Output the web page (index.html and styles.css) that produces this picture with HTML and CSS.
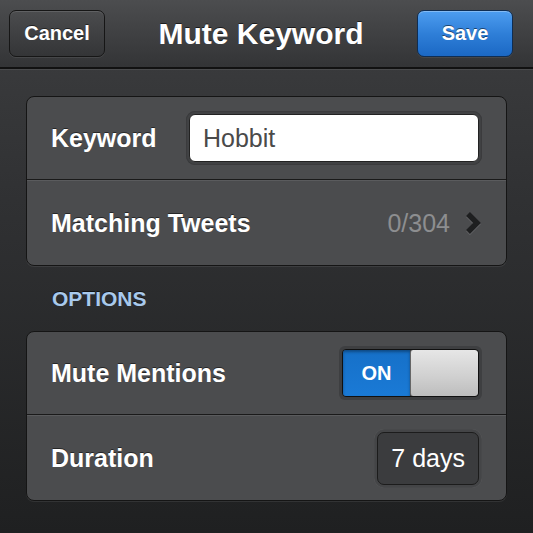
FILE: index.html
```html
<!DOCTYPE html>
<html>
<head>
<meta charset="utf-8">
<link rel="stylesheet" href="styles.css">
</head>
<body>
<div class="screen">
  <header class="navbar">
    <button class="nav-btn cancel">Cancel</button>
    <h1 class="title">Mute Keyword</h1>
    <button class="nav-btn save">Save</button>
  </header>
  <main class="content">
    <section class="card">
      <div class="row row-first">
        <span class="label">Keyword</span>
        <div class="input-wrap"><div class="input">Hobbit</div></div>
      </div>
      <div class="row row-second">
        <span class="label">Matching Tweets</span>
        <span class="value">0/304</span>
        <svg class="chevron" width="18" height="26" viewBox="0 0 18 26">
          <polyline points="4,4 13,13 4,22" fill="none" stroke="#6a6b6d" stroke-width="5.5" stroke-linejoin="miter" transform="translate(0,1)"/>
          <polyline points="4,4 13,13 4,22" fill="none" stroke="#1e1f20" stroke-width="5.5" stroke-linejoin="miter"/>
        </svg>
      </div>
    </section>
    <div class="section-title">OPTIONS</div>
    <section class="card">
      <div class="row row-first">
        <span class="label">Mute Mentions</span>
        <div class="switch-wrap">
          <div class="switch">
            <span class="switch-on">ON</span>
            <span class="switch-knob"></span>
          </div>
        </div>
      </div>
      <div class="row row-second">
        <span class="label">Duration</span>
        <div class="pill-wrap"><div class="pill">7 days</div></div>
      </div>
    </section>
  </main>
</div>
</body>
</html>
```

FILE: styles.css
```css
html, body {
  margin: 0;
  padding: 0;
  width: 533px;
  height: 533px;
  overflow: hidden;
  background: #252627;
}
.screen {
  width: 533px;
  height: 533px;
  display: flex;
  flex-direction: column;
  font-family: "Liberation Sans", Arial, sans-serif;
  background: linear-gradient(#3d3e40 0px, #303133 200px, #1f2021 533px);
}
.navbar {
  height: 69px;
  box-sizing: border-box;
  border-bottom: 2px solid #111;
  box-shadow: 0 1px 0 #4a4b4d;
  background: linear-gradient(#4c4d4f, #333436);
  display: flex;
  align-items: flex-start;
  justify-content: space-between;
  padding: 10px 20px 0 9px;
}
.nav-btn {
  width: 96px;
  height: 47px;
  border-radius: 7px;
  border: 1px solid #161616;
  font-family: "Liberation Sans", Arial, sans-serif;
  font-weight: bold;
  font-size: 20px;
  color: #fff;
  padding: 0;
  margin: 0;
  text-shadow: 0 -1px 0 rgba(0,0,0,0.5);
}
.cancel {
  background: linear-gradient(#4b4c4e, #343537);
  box-shadow: inset 0 1px 0 rgba(255,255,255,0.12), 0 1px 0 rgba(255,255,255,0.08);
}
.save {
  background: linear-gradient(#4d9df0, #2f7fd8 50%, #1b68c4);
  border-color: #0f2d52;
  box-shadow: inset 0 1px 0 rgba(255,255,255,0.3), 0 1px 0 rgba(255,255,255,0.08);
}
.title {
  margin: 5px 0 0 0;
  font-size: 30px;
  font-weight: bold;
  color: #fff;
  line-height: 38px;
  text-shadow: 0 -1px 0 rgba(0,0,0,0.6);
}
.content {
  padding: 27px 26px 0 26px;
  display: flex;
  flex-direction: column;
}
.card {
  background: #4b4c4e;
  border: 1px solid #151515;
  border-radius: 8px;
  box-shadow: 0 1px 0 rgba(255,255,255,0.08);
  display: flex;
  flex-direction: column;
  overflow: hidden;
}
.row {
  display: flex;
  align-items: center;
  padding: 0 24px 0 24px;
}
.row-first {
  height: 82px;
  border-bottom: 1px solid #1a1a1a;
}
.row-second {
  height: 84px;
  border-top: 1px solid #5a5b5d;
}
.label {
  font-size: 25px;
  font-weight: bold;
  color: #fff;
  text-shadow: 0 -1px 0 rgba(0,0,0,0.5);
  flex: 1;
}
.input-wrap {
  padding: 3px;
  border-radius: 9px;
  background: #424345;
  box-shadow: inset 0 0 2px rgba(0,0,0,0.4);
}
.input {
  width: 290px;
  height: 48px;
  box-sizing: border-box;
  background: #fff;
  border: 1px solid #222;
  border-radius: 6px;
  padding-left: 13px;
  font-size: 25px;
  line-height: 46px;
  color: #4a4a4a;
}
.value {
  font-size: 25px;
  color: #8d8e90;
  margin-right: 14px;
}
.chevron {
  display: block;
  margin-right: 0;
}
.section-title {
  height: 65px;
  box-sizing: border-box;
  padding: 21px 0 0 26px;
  font-size: 21px;
  font-weight: bold;
  color: #a8c9ec;
  text-shadow: 0 -1px 0 rgba(0,0,0,0.6);
}
.switch-wrap {
  padding: 3px;
  border-radius: 6px;
  background: #3e3f41;
}
.switch {
  width: 137px;
  height: 48px;
  box-sizing: border-box;
  border: 1px solid #111;
  border-radius: 4px;
  display: flex;
  overflow: hidden;
}
.switch-on {
  width: 67px;
  background: linear-gradient(#1670c8, #1a7ad6);
  color: #fff;
  font-weight: bold;
  font-size: 20px;
  display: flex;
  align-items: center;
  justify-content: center;
  box-shadow: inset 0 2px 3px rgba(0,0,0,0.35);
}
.switch-knob {
  flex: 1;
  background: linear-gradient(#e6e6e6, #cfcfcf 60%, #bdbdbd);
  border-left: 1px solid #666;
  border-radius: 3px;
}
.pill-wrap {
  padding: 3px;
  border-radius: 10px;
  background: #444547;
  box-shadow: inset 0 0 1px rgba(255,255,255,0.2);
}
.pill {
  height: 53px;
  box-sizing: border-box;
  padding: 0 13px;
  background: #3b3c3e;
  border: 1px solid #1c1c1c;
  border-radius: 7px;
  color: #fff;
  font-size: 25px;
  line-height: 51px;
}
```
